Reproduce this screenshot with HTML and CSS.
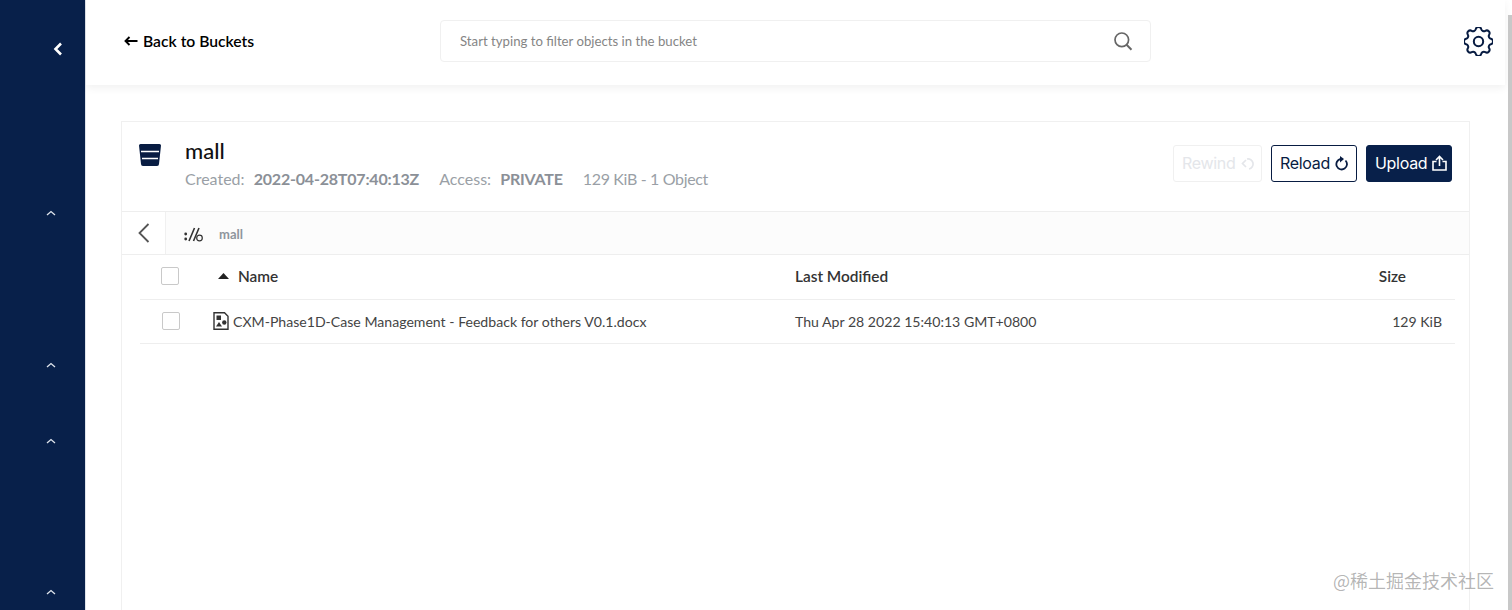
FILE: index.html
```html
<!DOCTYPE html>
<html lang="en">
<head>
  <meta charset="UTF-8" />
  <title>Object Browser</title>
  <link rel="stylesheet" href="styles.css">
</head>
<body>
  <aside class="sidebar">
    <button class="collapse-btn" aria-label="Collapse">
      <svg width="12" height="16" viewBox="0 0 12 16"><path d="M9 2.500 3.500 8 9 13.500" fill="none" stroke="#fff" stroke-width="2.600"/></svg>
    </button>
    <svg class="nav-caret first" width="10" height="6" viewBox="0 0 10 6"><path d="M1 5 5 1.500 9 5" fill="none" stroke="#dfe4ec" stroke-width="1.300"/></svg>
    <svg class="nav-caret second" width="10" height="6" viewBox="0 0 10 6"><path d="M1 5 5 1.500 9 5" fill="none" stroke="#dfe4ec" stroke-width="1.300"/></svg>
    <svg class="nav-caret third" width="10" height="6" viewBox="0 0 10 6"><path d="M1 5 5 1.500 9 5" fill="none" stroke="#dfe4ec" stroke-width="1.300"/></svg>
    <svg class="nav-caret fourth" width="10" height="6" viewBox="0 0 10 6"><path d="M1 5 5 1.500 9 5" fill="none" stroke="#dfe4ec" stroke-width="1.300"/></svg>
  </aside>

  <main class="main">
    <header class="topbar">
      <a class="back-link">
        <svg width="14" height="10" viewBox="0 0 14 10"><path d="M13.500 5H2M5.500 1 1.500 5l4 4" fill="none" stroke="#000" stroke-width="1.900"/></svg>
        Back to Buckets
      </a>
      <div class="search-box">
        <span>Start typing to filter objects in the bucket</span>
        <svg width="20" height="20" viewBox="0 0 20 20"><circle cx="8.800" cy="8.800" r="6.800" fill="none" stroke="#666" stroke-width="1.700"/><path d="m13.600 13.800 4.900 4.900" stroke="#666" stroke-width="2" fill="none"/></svg>
      </div>
      <svg class="gear" width="29" height="29" viewBox="3 3 18 18" fill="none" stroke="#081c42" stroke-width="1.250" stroke-linejoin="round">
        <path d="M10.325 4.317c.426-1.756 2.924-1.756 3.350 0a1.724 1.724 0 002.573 1.066c1.543-.940 3.310.826 2.370 2.370a1.724 1.724 0 001.065 2.572c1.756.426 1.756 2.924 0 3.350a1.724 1.724 0 00-1.066 2.573c.940 1.543-.826 3.310-2.370 2.370a1.724 1.724 0 00-2.572 1.065c-.426 1.756-2.924 1.756-3.350 0a1.724 1.724 0 00-2.573-1.066c-1.543.940-3.310-.826-2.370-2.370a1.724 1.724 0 00-1.065-2.572c-1.756-.426-1.756-2.924 0-3.350a1.724 1.724 0 001.066-2.573c-.940-1.543.826-3.310 2.370-2.370.996.608 2.296.070 2.572-1.065z"/>
        <circle cx="12" cy="12" r="2.900"/>
      </svg>
    </header>

    <section class="card">
      <div class="bucket-head">
        <svg class="bucket-icon" width="22" height="22" viewBox="0 0 22 22"><path d="M0 1.500Q0 0 1.500 0h19Q22 0 22 1.500L20 20q0 2-2 2H4q-2 0-2-2z" fill="#081c42"/><path d="M2 7.500h18M3 14.500h16" stroke="#fff" stroke-width="1.400"/></svg>
        <div class="bucket-info">
          <h1>mall</h1>
          <p class="meta">
            <span>Created:</span> <b>2022-04-28T07:40:13Z</b>
            <span class="meta-next">Access:</span> <b>PRIVATE</b>
            <span class="meta-next meta-usage">129 KiB - 1 Object</span>
          </p>
        </div>
        <div class="actions">
          <button class="btn btn-disabled">Rewind
            <svg width="15" height="15" viewBox="0 0 15 15" fill="none" stroke="#e4e6ea" stroke-width="1.700"><path d="M6 3a5 5 0 1 1 2 10"/><path d="M5 4 1.500 7.500 5 11"/></svg>
          </button>
          <button class="btn btn-outline">Reload
            <svg width="14" height="15" viewBox="0 0 14 15" fill="none" stroke="#081c42" stroke-width="1.800"><path d="M10.500 4.500A5.300 5.300 0 1 1 5.500 3"/><path d="M5 0v6.500L9 3z" fill="#081c42" stroke="none"/></svg>
          </button>
          <button class="btn btn-primary">Upload
            <svg width="15" height="16" viewBox="0 0 15 16" fill="none" stroke="#fff" stroke-width="1.600"><path d="M4.500 6.500H1v8.500h13V6.500h-3.500"/><path d="M7.500 11V1.500M4 5l3.500-3.500L11 5"/></svg>
          </button>
        </div>
      </div>

      <div class="crumbs">
        <div class="crumb-back">
          <svg width="12" height="20" viewBox="0 0 12 20"><path d="M10.500 1 1.500 10l9 9" fill="none" stroke="#555" stroke-width="1.800"/></svg>
        </div>
        <div class="crumb-path">
          <svg width="20" height="15" viewBox="0 0 20 15" fill="none" stroke="#333"><circle cx="1.700" cy="7" r="1.400" fill="#333" stroke="none"/><circle cx="1.700" cy="12" r="1.400" fill="#333" stroke="none"/><path d="M5 14 10.500 1M9.500 14 15 1" stroke-width="1.600"/><circle cx="15.500" cy="11" r="2.800" stroke-width="1.200"/></svg>
          <span>mall</span>
        </div>
      </div>

      <div class="table-wrap">
        <div class="row head-row">
          <span class="check"></span>
          <div class="col-name">
            <svg width="11" height="6" viewBox="0 0 11 6"><path d="M0 6 5.500 0 11 6z" fill="#222"/></svg>
            Name
          </div>
          <div class="col-date">Last Modified</div>
          <div class="col-size">Size</div>
        </div>
        <div class="row file-row">
          <span class="check"></span>
          <div class="col-name">
            <svg width="16" height="18" viewBox="0 0 16 18"><path d="M1 .800h10.500L15 4.300v12.900H1z" fill="#fff" stroke="#333" stroke-width="1.400"/><rect x="3.500" y="3.500" width="4.500" height="4.500" fill="#333"/><path d="m6 10 3 4.500H3z" fill="#333"/><circle cx="11.300" cy="10.500" r="2.200" fill="#333"/></svg>
            CXM-Phase1D-Case Management - Feedback for others V0.1.docx
          </div>
          <div class="col-date">Thu Apr 28 2022 15:40:13 GMT+0800</div>
          <div class="col-size">129 KiB</div>
        </div>
      </div>
    </section>
  </main>

  <div class="scrollbar"></div>
  <div class="watermark">@稀土掘金技术社区</div>
</body>
</html>
```

FILE: styles.css
```css
html, body {
  height: 100%;
}

body {
  font-family: 'Lato', sans-serif;
  margin: 0;
  height: 610px;
  overflow: hidden;
  display: flex;
  background: #fff;
  color: #222;
}

.sidebar {
  width: 85px;
  flex: none;
  background: #08204a;
  border-right: 1px solid #dfe3ea;
  display: flex;
  flex-direction: column;
  align-items: flex-start;
}

.collapse-btn {
  background: none;
  border: none;
  padding: 0;
  margin: 41px 0 0 52px;
  height: 16px;
  display: block;
}

.nav-caret {
  margin-left: 46px;
  display: block;
}

.nav-caret.first { margin-top: 153px; }
.nav-caret.second { margin-top: 146px; }
.nav-caret.third { margin-top: 70px; }
.nav-caret.fourth { margin-top: 145px; }

.main {
  flex: 1;
  min-width: 0;
  padding-right: 5px;
}

.topbar {
  height: 85px;
  display: flex;
  align-items: center;
  box-shadow: 0 3px 8px rgba(0,0,0,0.06);
  padding: 0 12px 0 38px;
  margin-right: 2px;
}

.back-link {
  width: 316px;
  flex: none;
  font-size: 15.7px;
  font-weight: 600;
  color: #000;
  display: flex;
  align-items: center;
  gap: 5px;
  margin-top: -3px;
}

.search-box {
  width: 711px;
  height: 42px;
  box-sizing: border-box;
  border: 1px solid #f0f0f0;
  border-radius: 4px;
  display: flex;
  align-items: center;
  justify-content: space-between;
  padding: 0 17px 0 19px;
  font-size: 13.2px;
  color: #858585;
  margin-top: -3px;
}

.gear {
  margin-left: auto;
  margin-top: -3px;
}

.card {
  margin: 36px 37px 0 35px;
  border: 1px solid #f0f0f0;
  border-bottom: none;
  height: 500px;
}

.bucket-head {
  height: 89px;
  display: flex;
  border-bottom: 1px solid #eee;
  padding: 0 17px;
}

.bucket-icon {
  margin-top: 22px;
  flex: none;
}

.bucket-info {
  margin-left: 24px;
}

h1 {
  margin: 15px 0 0;
  font-size: 22px;
  font-weight: 500;
  line-height: 28px;
  color: #111;
}

.meta {
  margin: 4px 0 0;
  font-size: 16px;
  line-height: 20px;
  color: #9a9fa6;
}

.meta b {
  color: #8b9097;
  font-weight: 700;
  margin-left: 5px;
  letter-spacing: -0.2px;
}

.meta-next {
  margin-left: 16px;
}

.meta-usage {
  letter-spacing: -0.35px;
}

.actions {
  margin-left: auto;
  display: flex;
  gap: 9px;
  padding-top: 23px;
}

.btn {
  font-family: 'Inter', sans-serif;
  height: 37px;
  box-sizing: border-box;
  border-radius: 3px;
  font-size: 16px;
  letter-spacing: -0.3px;
  padding: 0 0 1px 8px;
  display: flex;
  align-items: center;
  gap: 5px;
}

.btn svg {
  flex: none;
}

.btn-disabled {
  width: 89px;
  background: #fff;
  border: 1px solid #f0f0f0;
  color: #e4e6ea;
}

.btn-outline {
  width: 86px;
  background: #fff;
  border: 1px solid #081c42;
  color: #081c42;
}

.btn-primary {
  width: 86px;
  background: #08204a;
  border: 1px solid #08204a;
  color: #fff;
}

.crumbs {
  height: 42px;
  display: flex;
  align-items: stretch;
  border-bottom: 1px solid #eee;
}

.crumb-back {
  width: 43px;
  display: flex;
  align-items: center;
  justify-content: center;
  border-right: 1px solid #f0f0f0;
}

.crumb-path {
  flex: 1;
  background: #fcfcfc;
  display: flex;
  align-items: center;
  gap: 15px;
  padding: 2px 0 0 18px;
  font-size: 13px;
  font-weight: 700;
  color: #8f959c;
}

.table-wrap {
  padding: 0 14px 0 18px;
}

.row {
  display: flex;
  align-items: center;
  border-bottom: 1px solid #eee;
}

.head-row {
  height: 41px;
  padding-bottom: 3px;
  font-size: 15.4px;
  font-weight: 600;
  color: #333;
}

.file-row {
  height: 42px;
  padding-bottom: 1px;
  font-size: 14.1px;
  color: #444;
}

.check {
  width: 16px;
  height: 16px;
  flex: none;
  border: 1px solid #c9c9c9;
  border-radius: 2px;
  margin-left: 21px;
  background: #fff;
}

.col-name {
  flex: none;
  display: flex;
  align-items: center;
}

.head-row .col-name {
  margin-left: 39px;
  width: 577px;
  gap: 9px;
}

.file-row .check {
  margin-left: 22px;
}

.file-row .col-name {
  margin-left: 33px;
  gap: 4px;
  width: 582px;
}

.col-date {
  width: 400px;
  flex: none;
}

.col-size {
  flex: 1;
  text-align: right;
  padding-right: 13px;
}

.head-row .col-size {
  padding-right: 49px;
}

.scrollbar {
  position: absolute;
  top: 15px;
  right: 0;
  width: 4px;
  height: 595px;
  background: #c8c8c8;
}

.watermark {
  position: absolute;
  right: 18px;
  bottom: 17px;
  font-family: 'Noto Sans CJK SC', sans-serif;
  font-size: 18px;
  color: rgba(90, 90, 90, 0.45);
}
```
